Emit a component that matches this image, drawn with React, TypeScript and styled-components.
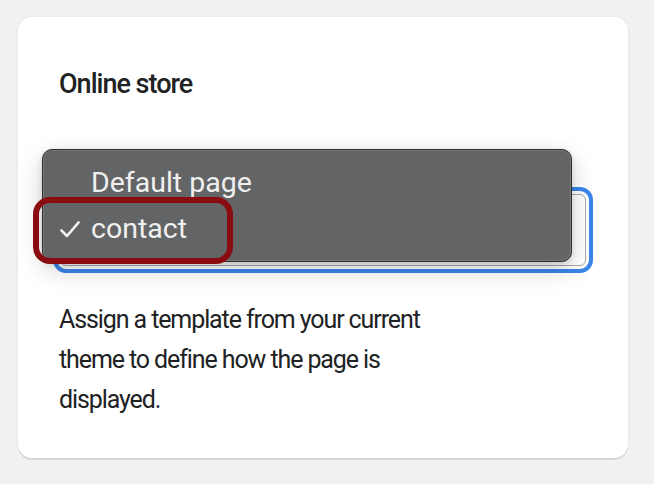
import * as React from 'react';
import styled, { createGlobalStyle } from 'styled-components';

const GlobalStyle = createGlobalStyle`
  html, body {
    margin: 0;
    padding: 0;
    background: #f1f1f1;
  }
  body {
    font-family: Roboto, 'Liberation Sans', sans-serif;
    color: #202223;
  }
  * {
    box-sizing: border-box;
  }
`;

const Page = styled.div`
  padding: 17px 0 26px 18px;
`;

const Card = styled.section`
  width: 610px;
  height: 441px;
  padding: 51px 42px 38px 41px;
  background: #ffffff;
  border-radius: 14px;
  box-shadow: 0 2px 1px rgba(0, 0, 0, 0.1), 0 0 3px rgba(0, 0, 0, 0.06);
`;

const Title = styled.h2`
  margin: 0;
  font-size: 27px;
  line-height: 33px;
  font-weight: 500;
  letter-spacing: -1px;
`;

const SelectWrap = styled.div`
  position: relative;
  margin: 93px 0 0 1px;
  width: 526px;
`;

const SelectBox = styled.div`
  height: 72px;
  background: #ffffff;
  border: 1px solid #a9a9a9;
  border-radius: 6px;
  outline: 4px solid #3b85ea;
  outline-offset: 3px;
`;

const Menu = styled.ul`
  position: absolute;
  left: -18px;
  top: -45px;
  width: 530px;
  height: 113px;
  margin: 0;
  padding: 10px 0 9px 17px;
  list-style: none;
  background: #636465;
  border: 1px solid #2e2e2e;
  border-radius: 10px;
  box-shadow: inset 0 0 0 1px rgba(255, 255, 255, 0.14), 0 8px 24px rgba(0, 0, 0, 0.18),
    0 2px 6px rgba(0, 0, 0, 0.12);
`;

const MenuItem = styled.li`
  display: flex;
  align-items: center;
  height: 46px;
  font-family: Roboto, 'Liberation Sans', sans-serif;
  font-size: 28.5px;
  line-height: 46px;
  color: #f0f0f0;
`;

const CheckSlot = styled.span`
  display: inline-flex;
  align-items: center;
  width: 31px;
  flex: none;
`;

const Highlight = styled.div`
  position: absolute;
  left: -27px;
  top: 3px;
  width: 200px;
  height: 67px;
  border: 6px solid #8a0c10;
  border-radius: 17px;
  pointer-events: none;
`;

const Help = styled.p`
  margin: 34px 0 0;
  font-size: 25px;
  line-height: 40px;
  letter-spacing: -1.1px;
  color: #202223;
`;

const Check = () => (
  <svg width="20" height="17" viewBox="0 0 20 17" fill="none">
    <path d="M1.5 9.5 L7 15 L18.5 1.5" stroke="#f2f2f2" strokeWidth="2.6" strokeLinecap="round" strokeLinejoin="round" />
  </svg>
);

const options = [
  { label: 'Default page', selected: false },
  { label: 'contact', selected: true },
];

export default function App() {
  return (
    <>
      <GlobalStyle />
      <Page>
        <Card>
          <Title>Online store</Title>
          <SelectWrap>
            <SelectBox />
            <Menu>
              {options.map(o => (
                <MenuItem key={o.label}>
                  <CheckSlot>{o.selected && <Check />}</CheckSlot>
                  {o.label}
                </MenuItem>
              ))}
            </Menu>
            <Highlight />
          </SelectWrap>
          <Help>
            Assign a template from your current
            <br />
            theme to define how the page is
            <br />
            displayed.
          </Help>
        </Card>
      </Page>
    </>
  );
}
